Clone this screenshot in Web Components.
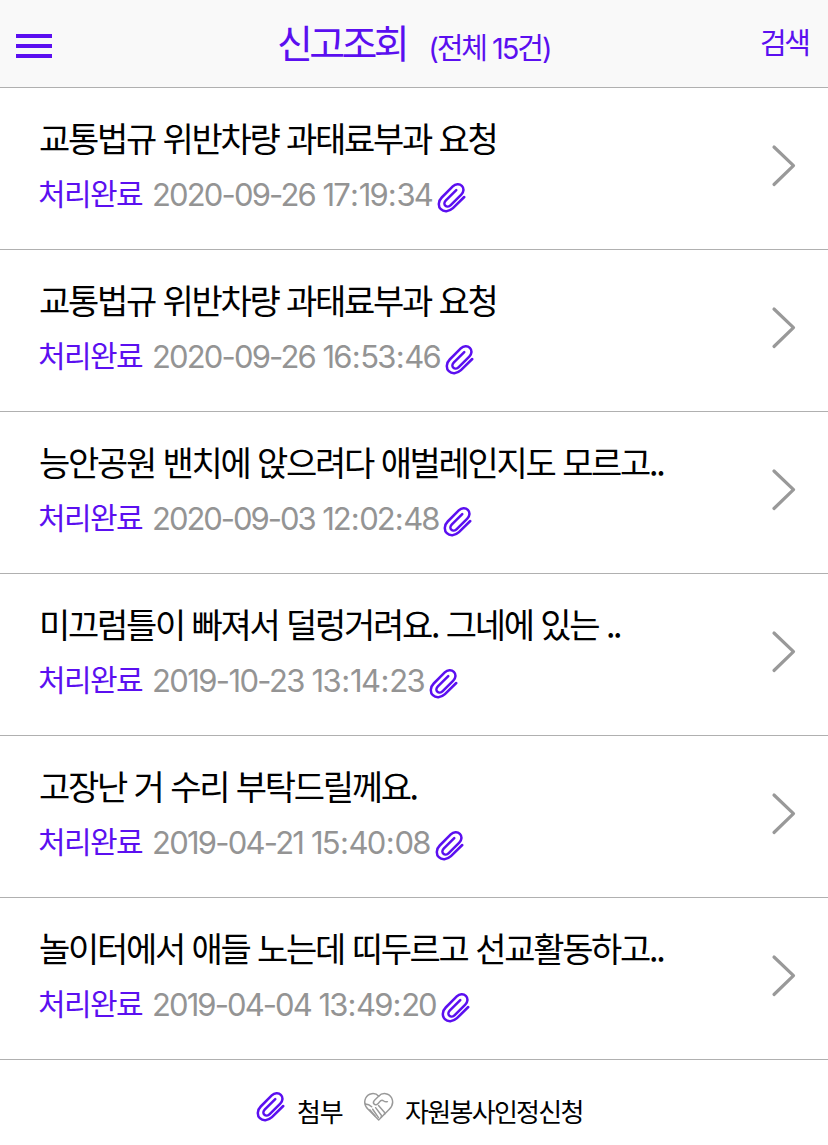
<!DOCTYPE html>
<html lang="ko"><head><meta charset="utf-8"><title>신고조회</title>
<style>html,body{margin:0;background:#fff}body{font-family:"Inter","Noto Sans CJK KR",sans-serif;overflow:hidden}</style></head>
<body><report-page></report-page>
<script>
const define=(name,html,setup)=>{
  const t=document.createElement('template');t.innerHTML=html;
  customElements.define(name,class extends HTMLElement{
    constructor(){super();this.attachShadow({mode:'open'}).append(t.content.cloneNode(true));}
    connectedCallback(){if(setup)setup(this);}
  });
};
define('clip-icon',`<style>:host{display:block;width:30px;height:32px;flex:none}svg{display:block}</style>
<svg width="29" height="31" viewBox="0 0 30 32" fill="none" stroke="#5b0ff0" stroke-width="2.6" stroke-linecap="round" stroke-linejoin="round"><path d="M28.2 15.5 16.5 27.1C12.4 31 6.9 31 4 28.1S1 19.9 4.9 16L16.3 4.6C19.2 1.7 23.3 1.5 25.7 3.9s2.2 6.3-.6 9.1L14.2 23.9c-1.8 1.8-4.2 2-5.6.6s-1.2-3.8.6-5.6L19.9 8.3"/></svg>`);
define('heart-hands-icon',`<style>:host{display:block;width:32px;height:32px;flex:none}svg{display:block}</style>
<svg width="31" height="31" viewBox="0 0 32 32" fill="none" stroke="#999" stroke-width="1.5" stroke-linecap="round" stroke-linejoin="round"><path d="M16.2 30 5.5 19.2C1.8 15.5 1 11 2.8 7.2 5.2 2.2 12.5 1 16.2 5.4 20 1 27.2 2.2 29.6 7.2c1.8 3.8 1 8.3-2.7 12L16.2 30Z"/><path d="M16.2 5.4 12.4 9c-1.5 1.4-2 3.4-1 4.5 1.2 1.3 3 .7 4.2-.5 1.5-1.4 2-3.4 4-3.4s2 2.4 5.6 1.4M2.5 13.4c3.2 0 4.8 1.2 6.5 2.8M16 15l6.5 7.5M13 17.2l6.3 8.3M10 18.8l6 8.6M7 19.4l5.5 6.4M22.5 22.5c.4.9 0 1.5-.8 1.4M19.3 25.5c.4.9 0 1.4-.8 1.4"/></svg>`);
define('menu-button',`<style>:host{display:flex;flex-direction:column;gap:6px;width:36px;margin-top:5px}i{height:4px;background:#5b0ff0}</style><i></i><i></i><i></i>`);
define('page-header',`<style>
:host{display:grid;grid-template-columns:262px 1fr 68px;align-items:center;height:87px;background:#f9f9f9;border-bottom:1px solid #b0b0b0;color:#5b0ff0;white-space:pre}
menu-button{margin-left:16px}.title{display:flex;align-items:baseline;padding:0 0 6px 15px}
.name{font:400 39px/50px "Noto Sans CJK KR",sans-serif;letter-spacing:-3.6px}
.count{font-size:29px;letter-spacing:-2.05px;margin-left:22px;position:relative;top:1px}
.search{padding-bottom:6px;font:400 29px/44px "Noto Sans CJK KR",sans-serif;letter-spacing:-2.4px}
</style><menu-button></menu-button><div class="title"><span class="name">신고조회</span><span class="count">(전체 15건)</span></div><span class="search">검색</span>`);
define('report-row',`<style>
:host{display:grid;grid-template-columns:1fr 26px;padding:0 31px 0 39px;height:161px;border-bottom:1px solid #b0b0b0;white-space:nowrap}
.title{height:55px;margin-top:25px;font:400 34px/50px "Noto Sans CJK KR",sans-serif;letter-spacing:-2.3px;word-spacing:.4px}
.meta{display:flex;height:50px;line-height:53px}
.status{width:114px;margin-left:-1px;color:#5b0ff0;font:400 30px/48px "Noto Sans CJK KR",sans-serif;letter-spacing:-1.6px}
.date{color:#949494;font-size:31px;letter-spacing:-1.8px;word-spacing:.8px;white-space:pre}
.colon{margin:0 1.5px 0 1.1px}
clip-icon{margin:14px 0 0 5px}svg{margin-top:56px}
</style><div><div class="title"><slot></slot></div><div class="meta"><span class="status">처리완료</span><span class="date"></span><clip-icon></clip-icon></div></div>
<svg width="26" height="44" viewBox="0 0 26 44" fill="none" stroke="#999" stroke-width="3.2" stroke-linecap="round" stroke-linejoin="round"><path d="m3 3 19.5 18.7L3 40.5"/></svg>`,
el=>{const d=el.shadowRoot.querySelector('.date');d.innerHTML=el.getAttribute('date').replaceAll(':','<span class="colon">:</span>');d.style.letterSpacing=el.getAttribute('tracking')+'px';});
define('icon-legend',`<style>:host{display:flex;height:85px;padding:30px 0 0 256px;box-sizing:border-box;font:400 26px/42px "Noto Sans CJK KR",sans-serif;letter-spacing:-1.7px;white-space:nowrap}clip-icon{margin-top:1px}.a{margin-left:11px;width:66px;letter-spacing:-1.2px}heart-hands-icon{margin:1px 0 0 0}.b{margin-left:10px}</style>
<clip-icon></clip-icon><span class="a">첨부</span><heart-hands-icon></heart-hands-icon><span class="b">자원봉사인정신청</span>`);
define('report-page',`<style>:host{display:block;width:828px}</style><page-header></page-header>
<report-row tracking="-1.85" date="2020-09-26 17:19:34">교통법규 위반차량 과태료부과 요청</report-row>
<report-row tracking="-1.85" date="2020-09-26 16:53:46">교통법규 위반차량 과태료부과 요청</report-row>
<report-row tracking="-2.02" date="2020-09-03 12:02:48">능안공원 밴치에 앉으려다 애벌레인지도 모르고..</report-row>
<report-row tracking="-1.63" date="2019-10-23 13:14:23">미끄럼틀이 빠져서 덜렁거려요. 그네에 있는 ..</report-row>
<report-row tracking="-1.77" date="2019-04-21 15:40:08">고장난 거 수리 부탁드릴께요.</report-row>
<report-row tracking="-1.91" date="2019-04-04 13:49:20">놀이터에서 애들 노는데 띠두르고 선교활동하고..</report-row>
<icon-legend></icon-legend>`);
</script></body></html>
